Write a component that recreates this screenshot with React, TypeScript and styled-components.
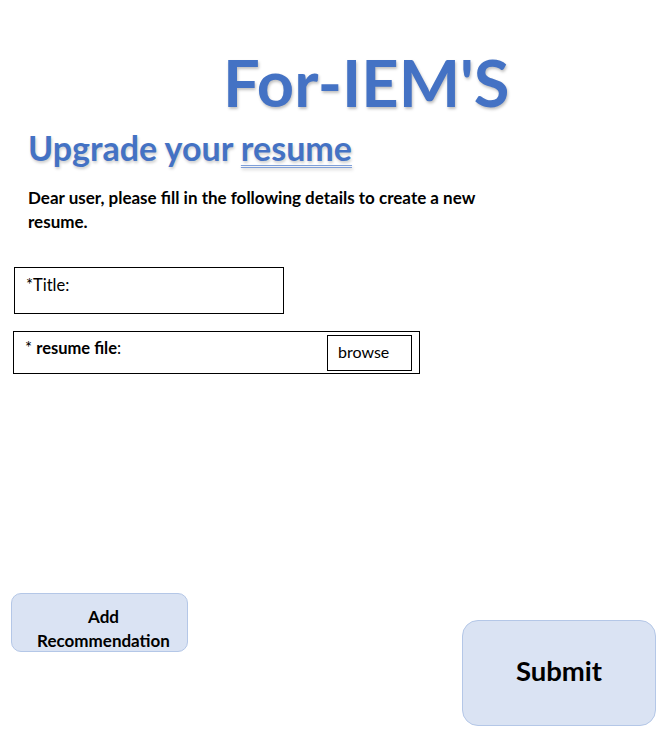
import React from "react";
import styled, { createGlobalStyle } from "styled-components";

const GlobalStyle = createGlobalStyle`
  html, body {
    margin: 0;
    padding: 0;
    background: #ffffff;
    font-family: Lato, "Open Sans", sans-serif;
    color: #000000;
  }
`;

const Page = styled.div`
  width: 659px;
  height: 751px;
  display: flex;
  flex-direction: column;
  box-sizing: border-box;
  padding-top: 44px;
`;

const Brand = styled.h1`
  margin: 0;
  align-self: flex-start;
  margin-left: 223px;
  font-size: 65px;
  line-height: 76px;
  font-weight: 700;
  color: #4472c4;
  text-shadow: 1px 2px 3px rgba(0, 0, 0, 0.25);
`;

const Heading = styled.h2`
  margin: 8px 0 0 28px;
  font-size: 34px;
  line-height: 40px;
  font-weight: 700;
  color: #4472c4;
  text-shadow: 1px 2px 3px rgba(0, 0, 0, 0.2);
`;

const Underlined = styled.span`
  text-decoration: underline double #7f9fd8;
  text-underline-offset: 4px;
  text-decoration-thickness: 1px;
`;

const Intro = styled.p`
  margin: 18px 0 0 28px;
  width: 470px;
  font-size: 17px;
  line-height: 24px;
  font-weight: 700;
`;

const Field = styled.div<{ $width: number; $height: number; $left: number }>`
  box-sizing: border-box;
  width: ${(p) => p.$width}px;
  height: ${(p) => p.$height}px;
  margin-left: ${(p) => p.$left}px;
  border: 1px solid #000000;
  display: flex;
  align-items: flex-start;
  justify-content: space-between;
  padding: 4px 7px 0 11px;
  font-size: 16.5px;
  line-height: 24px;
`;

const TitleField = styled(Field)`
  margin-top: 33px;
`;

const FileField = styled(Field)`
  margin-top: 17px;
  padding-top: 3px;
`;

const Label = styled.span`
  padding-top: 1px;
`;

const Browse = styled.div`
  box-sizing: border-box;
  width: 85px;
  height: 36px;
  border: 1px solid #000000;
  padding: 4px 0 0 10px;
  font-size: 16px;
  line-height: 24px;
`;

const Footer = styled.div`
  margin-top: auto;
  display: flex;
  justify-content: space-between;
  align-items: flex-start;
  padding: 0 3px 25px 11px;
`;

const SoftButton = styled.button`
  box-sizing: border-box;
  font-family: Lato, "Open Sans", sans-serif;
  font-weight: 700;
  color: #000000;
  background: #dae3f3;
  border: 1px solid #b4c7e7;
  cursor: pointer;
`;

const RecommendButton = styled(SoftButton)`
  width: 177px;
  height: 59px;
  border-radius: 10px;
  font-size: 17px;
  line-height: 24px;
  padding: 11px 0 0 8px;
`;

const SubmitButton = styled(SoftButton)`
  margin-top: 27px;
  width: 194px;
  height: 106px;
  border-radius: 16px;
  font-size: 27.5px;
  padding-bottom: 6px;
`;

const App: React.FC = () => {
  return (
    <>
      <GlobalStyle />
      <Page>
        <Brand>For-IEM'S</Brand>
        <Heading>
          Upgrade your <Underlined>resume</Underlined>
        </Heading>
        <Intro>
          Dear user, please fill in the following details to create a new
          resume.
        </Intro>
        <TitleField $width={270} $height={47} $left={14}>
          <Label>*Title:</Label>
        </TitleField>
        <FileField $width={407} $height={43} $left={13}>
          <Label>
            * <b>resume file</b>:
          </Label>
          <Browse>browse</Browse>
        </FileField>
        <Footer>
          <RecommendButton>
            Add
            <br />
            Recommendation
          </RecommendButton>
          <SubmitButton>Submit</SubmitButton>
        </Footer>
      </Page>
    </>
  );
};

export default App;
